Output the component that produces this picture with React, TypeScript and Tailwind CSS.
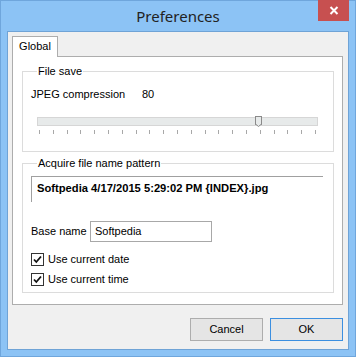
import React from 'react'

const ui = { fontFamily: '"Liberation Sans", Arial, sans-serif' }

const Check = () => (
  <span className="flex h-[13px] w-[13px] items-center justify-center border border-[#333] bg-white">
    <svg width="9" height="9" viewBox="0 0 9 9">
      <path d="M1 4.5 L3.3 7 L8 1.5" fill="none" stroke="#111" strokeWidth="1.8" />
    </svg>
  </span>
)

const GroupBox = ({ title, className, children }: { title: string; className?: string; children: React.ReactNode }) => (
  <fieldset className={`border border-[#dcdcdc] ${className ?? ''}`}>
    <legend className="ml-[6px] px-px text-[11px] leading-[13px] text-black">{title}</legend>
    {children}
  </fieldset>
)

const ticks = Array.from({ length: 21 }, (_, i) => i)

export default function App() {
  return (
    <div
      className="flex h-[357px] w-[356px] flex-col border border-[#6fa6dc] bg-[#8cc3f5] px-[6px] pb-[6px]"
      style={ui}
    >
      {/* title bar */}
      <div className="flex h-[30px] shrink-0 items-start">
        <div className="flex-1" />
        <div className="pt-[6px] text-[15px] leading-[18px] text-[#222]" style={{ fontFamily: '"Noto Sans", sans-serif' }}>
          Preferences
        </div>
        <div className="flex flex-1 justify-end">
          <div className="-mt-px flex h-[21px] w-[31px] items-center justify-center bg-[#c75050]">
            <svg width="10" height="9" viewBox="0 0 10 9">
              <path d="M1.5 1 L8.5 8 M8.5 1 L1.5 8" stroke="white" strokeWidth="2" />
            </svg>
          </div>
        </div>
      </div>

      {/* client area */}
      <div className="flex flex-1 flex-col border border-[#6fa3d6] bg-[#f0f0f0] pl-[4px] pr-[5px] pt-[4px] pb-[8px]">
        {/* tabs */}
        <div className="flex h-[20px]">
          <div className="relative z-10 flex h-[21px] w-[46px] items-start justify-center border border-b-0 border-[#adadad] bg-white pt-[3px] text-[11px] leading-[13px] text-black">
            Global
          </div>
        </div>
        <div className="flex h-[249px] flex-col border border-[#adadad] bg-white pl-[9px] pr-[8px] pt-[8px]">
          <GroupBox title="File save" className="h-[87px] px-[8px]">
            <div className="flex pt-[10px] text-[11px] leading-[13px] text-black">
              <span className="w-[111px]">JPEG compression</span>
              <span>80</span>
            </div>
            <div className="pl-[6px] pr-[7px] pt-[16px]">
              <div className="relative h-[9px] border border-[#d6d6d6] bg-[#e7eaea]">
                <div className="absolute left-[217px] top-[-2px] flex flex-col items-center">
                  <div className="h-[9px] w-[7px] border border-b-0 border-[#8a8a8a] bg-[#e7eaea]" />
                  <svg width="7" height="3" viewBox="0 0 7 3" className="-mt-px">
                    <path d="M0.5 0 L3.5 2.5 L6.5 0" fill="#e7eaea" stroke="#8a8a8a" strokeWidth="1" />
                  </svg>
                </div>
              </div>
              <div className="mt-[4px] flex justify-between pl-[2px] pr-[2px]">
                {ticks.map((t) => (
                  <span key={t} className="h-[4px] w-px bg-[#a8a8a8]" />
                ))}
              </div>
            </div>
          </GroupBox>

          <GroupBox title="Acquire file name pattern" className="mt-[5px] h-[136px] pl-[8px] pr-[10px]">
            <div className="mt-[6px] h-[26px] border-l border-t border-[#a0a0a0] pl-[5px] pt-[5px] text-[11.2px] font-bold leading-[13px] text-black">
              Softpedia 4/17/2015 5:29:02 PM {'{INDEX}'}.jpg
            </div>
            <div className="mt-[19px] flex items-center text-[11px] leading-[13px] text-black">
              <span className="w-[59px]">Base name</span>
              <div className="flex h-[21px] w-[122px] items-center border border-[#a8a8a8] bg-white pl-[4px]">Softpedia</div>
            </div>
            <div className="mt-[11px] flex items-center gap-[4px] text-[11px] leading-[13px] text-black">
              <Check />
              <span>Use current date</span>
            </div>
            <div className="mt-[7px] flex items-center gap-[4px] text-[11px] leading-[13px] text-black">
              <Check />
              <span>Use current time</span>
            </div>
          </GroupBox>
        </div>

        {/* buttons */}
        <div className="mt-auto flex justify-end gap-[7px]">
          <button className="h-[23px] w-[73px] border border-[#adadad] bg-[#e5e5e5] text-[11px] text-black">Cancel</button>
          <button className="h-[23px] w-[73px] border border-[#3c8fe0] bg-[#e5e5e5] text-[11px] text-black">OK</button>
        </div>
      </div>
    </div>
  )
}
